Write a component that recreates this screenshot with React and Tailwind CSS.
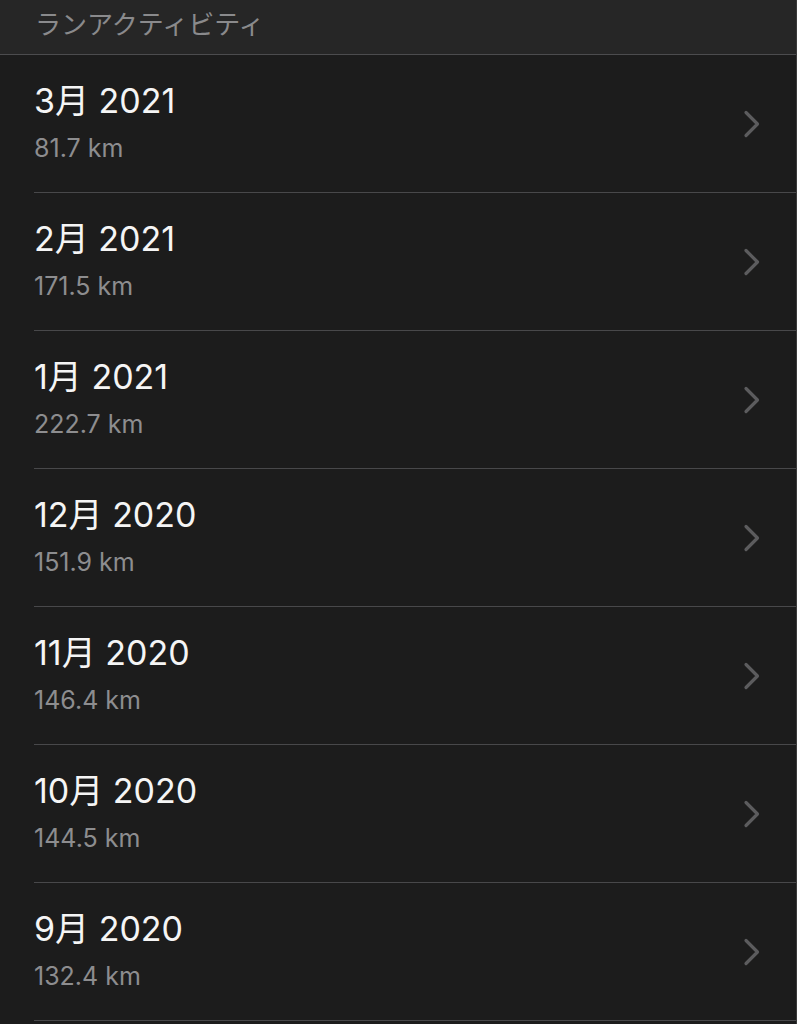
import React from "react";

const months = [
    { label: "3月 2021", km: "81.7 km" },
    { label: "2月 2021", km: "171.5 km" },
    { label: "1月 2021", km: "222.7 km" },
    { label: "12月 2020", km: "151.9 km" },
    { label: "11月 2020", km: "146.4 km" },
    { label: "10月 2020", km: "144.5 km" },
    { label: "9月 2020", km: "132.4 km" },
];

function Chevron() {
    return (
        <svg width="18" height="28" viewBox="0 0 18 28" fill="none" className="shrink-0 self-center">
            <path d="M3 2.5 L14.5 14 L3 25.5" stroke="#5c5c5e" strokeWidth="3.2" strokeLinecap="round" strokeLinejoin="round" />
        </svg>
    );
}

function MonthRow({ label, km }) {
    return (
        <div className="pl-[34px]">
            <div className="flex h-[138px] border-b border-[#48484a] pr-[35px] pt-[26px]">
                <div className="flex flex-col flex-1">
                    <span className="text-[34px] leading-[40px] text-[#f5f5f5]">{label}</span>
                    <span className="text-[25px] leading-[28px] text-[#8d8d8f] mt-[13px]">{km}</span>
                </div>
                <div className="flex items-center -mt-[26px]">
                    <Chevron />
                </div>
            </div>
        </div>
    );
}

export default function App() {
    return (
        <div
            className="w-[797px] h-[1024px] overflow-hidden bg-[#1c1c1c] border-r border-[#3a3a3a]"
            style={{ fontFamily: "Inter, 'Noto Sans CJK JP', sans-serif" }}
        >
            <div className="h-[55px] bg-[#262626] border-b border-[#4c4c4e] pl-[35px] pt-[8px]">
                <span className="text-[26px] leading-[34px] text-[#8a8a8c]">ランアクティビティ</span>
            </div>
            {months.map((m) => (
                <MonthRow key={m.label} {...m} />
            ))}
        </div>
    );
}
